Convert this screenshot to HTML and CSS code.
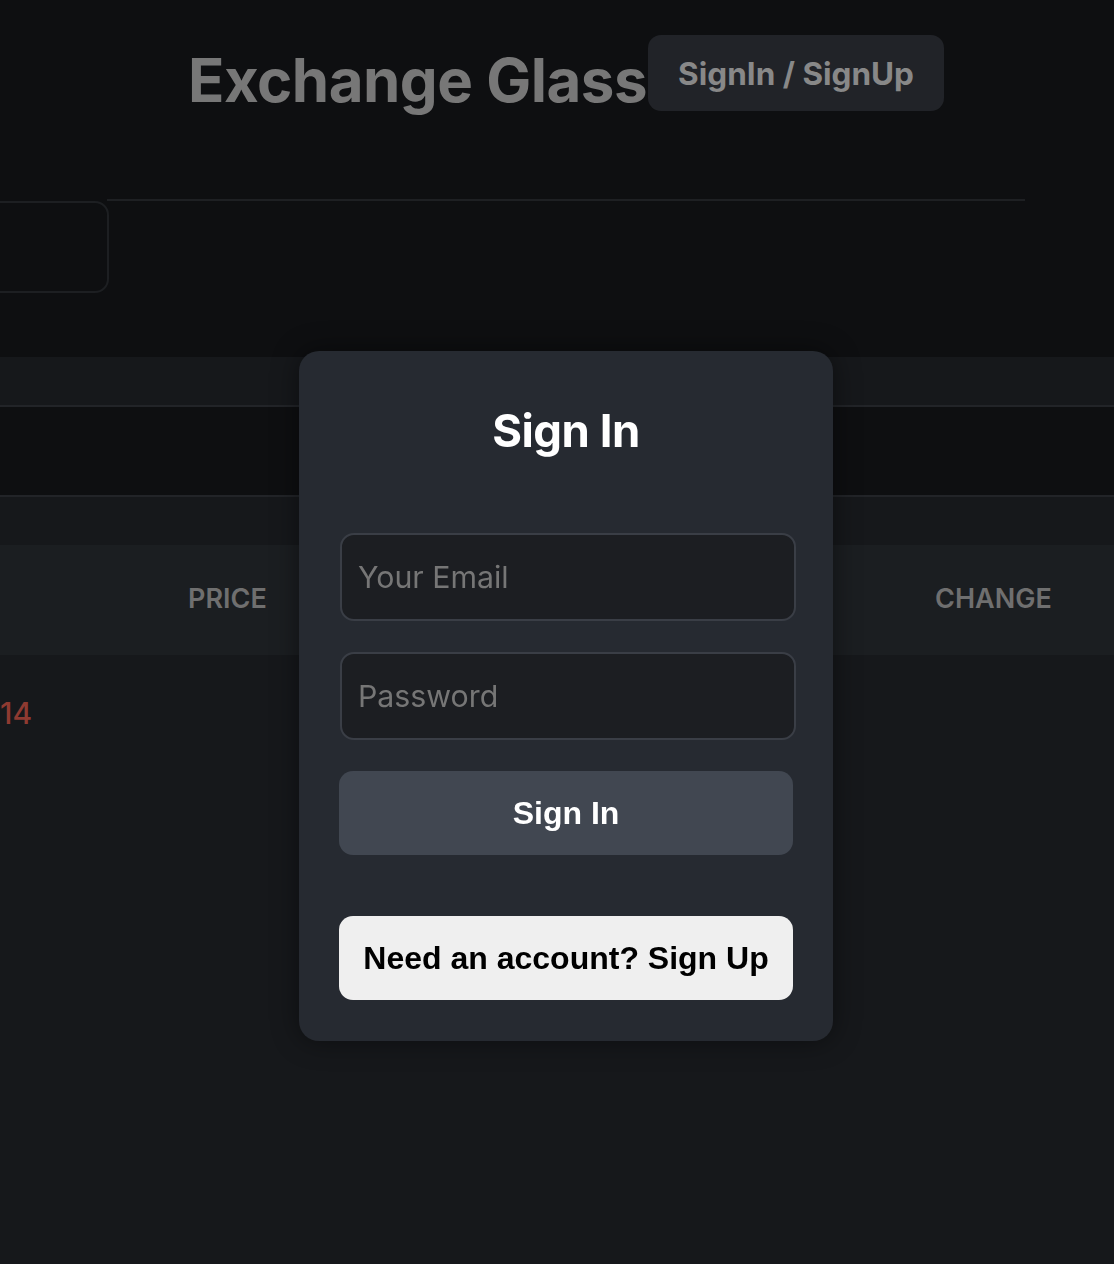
FILE: index.html
```html
<!DOCTYPE html>
<html lang="en">
<head>
<meta charset="utf-8">
<title>Exchange Glass</title>
<link rel="stylesheet" href="styles.css">
</head>
<body>
<div class="page">
  <header class="top">
    <div class="brand">
      <h1 class="title">Exchange Glass</h1>
      <button class="auth-btn">SignIn / SignUp</button>
    </div>
  </header>
  <section class="toolbar">
    <div class="search-box"></div>
    <div class="toolbar-line"></div>
  </section>
  <div class="band band-light"></div>
  <div class="band band-dark"></div>
  <div class="band band-light"></div>
  <div class="table-head">
    <span class="th th-price">PRICE</span>
    <span class="th th-change">CHANGE</span>
  </div>
  <div class="table-row">
    <span class="cell-red">14</span>
  </div>
</div>

<div class="overlay">
  <div class="modal">
    <h2 class="modal-title">Sign In</h2>
    <form class="form">
      <input class="field" type="email" placeholder="Your Email">
      <input class="field" type="password" placeholder="Password">
      <button type="button" class="btn btn-primary">Sign In</button>
    </form>
    <button type="button" class="btn btn-light">Need an account? Sign Up</button>
  </div>
</div>
</body>
</html>
```
FILE: styles.css
```css
* { box-sizing: border-box; }
html, body { margin: 0; padding: 0; }
body {
  background: #16181b;
  font-family: Inter, "Liberation Sans", sans-serif;
  width: 1114px;
  height: 1264px;
  overflow: hidden;
}
.page {
  display: flex;
  flex-direction: column;
  min-height: 1264px;
}
.top {
  background: #0e0f11;
  padding-top: 35px;
  height: 200px;
  display: flex;
  justify-content: center;
  padding-left: 18px;
}
.brand {
  display: flex;
  align-items: flex-start;
  height: 76px;
}
.title {
  margin: 0;
  font-size: 60px;
  font-weight: 700;
  color: #777777;
  letter-spacing: -0.5px;
  line-height: 76px;
  padding-top: 7px;
}
.auth-btn {
  height: 76px;
  width: 296px;
  border: none;
  border-radius: 13px;
  background: #212328;
  color: #888888;
  font-family: Inter, "Liberation Sans", sans-serif;
  font-weight: 700;
  font-size: 31.5px;
  padding: 0;
  margin-left: 1px;
}
.toolbar {
  background: #0e0f11;
  height: 157px;
  display: flex;
  align-items: flex-start;
}
.search-box {
  flex: none;
  width: 131px;
  height: 92px;
  margin-left: -22px;
  margin-top: 1px;
  border: 2px solid #1d1f22;
  border-radius: 14px;
}
.toolbar-line {
  flex: none;
  margin-top: -1px;
  margin-left: -2px;
  width: 918px;
  height: 2px;
  background: #1e2023;
}
.band { height: 48px; }
.band-light { background: #16181b; }
.band-dark {
  background: #0e0f11;
  height: 92px;
  border-top: 2px solid #222428;
  border-bottom: 2px solid #222428;
}
.table-head {
  height: 110px;
  background: #1b1e21;
  position: relative;
}
.th {
  font-size: 27px;
  font-weight: 600;
  color: #6f6f6f;
  position: absolute;
  top: 37px;
}
.th-price { left: 188px; }
.th-change { left: 935px; }
.table-row {
  height: 116px;
  display: flex;
  align-items: center;
}
.cell-red {
  color: #8e3a31;
  font-size: 30px;
  font-weight: 500;
  margin-left: 0;
}

.overlay {
  position: fixed;
  inset: 0;
  display: flex;
  justify-content: center;
  align-items: flex-start;
  padding-top: 351px;
  padding-left: 18px;
}
.modal {
  width: 534px;
  height: 690px;
  background: #262a31;
  border-radius: 20px;
  box-shadow: 0 0 28px rgba(0, 0, 0, 0.45);
  padding: 40px 40px 41px 40px;
  display: flex;
  flex-direction: column;
}
.modal-title {
  margin: 0;
  text-align: center;
  color: #ffffff;
  font-size: 45.5px;
  font-weight: 700;
  line-height: 1;
  padding-top: 17px;
  height: 143px;
  letter-spacing: -0.5px;
}
.form {
  display: flex;
  flex-direction: column;
  gap: 31px;
}
.field {
  width: 456px;
  height: 88px;
  margin-left: 1px;
  background: #1c1e22;
  border: 2px solid #3a3e46;
  border-radius: 14px;
  padding: 0 16px;
  font-family: Inter, "Liberation Sans", sans-serif;
  font-size: 30.3px;
  color: #dddddd;
  outline: none;
}
.field::placeholder { color: #767676; }
.btn {
  width: 454px;
  height: 84px;
  border: none;
  border-radius: 14px;
  font-family: "Liberation Sans", Arial, sans-serif;
  font-weight: 700;
  font-size: 32px;
}
.btn-primary {
  background: #414751;
  color: #ffffff;
}
.btn-light {
  margin-top: 61px;
  background: #efefef;
  color: #000000;
}
```
